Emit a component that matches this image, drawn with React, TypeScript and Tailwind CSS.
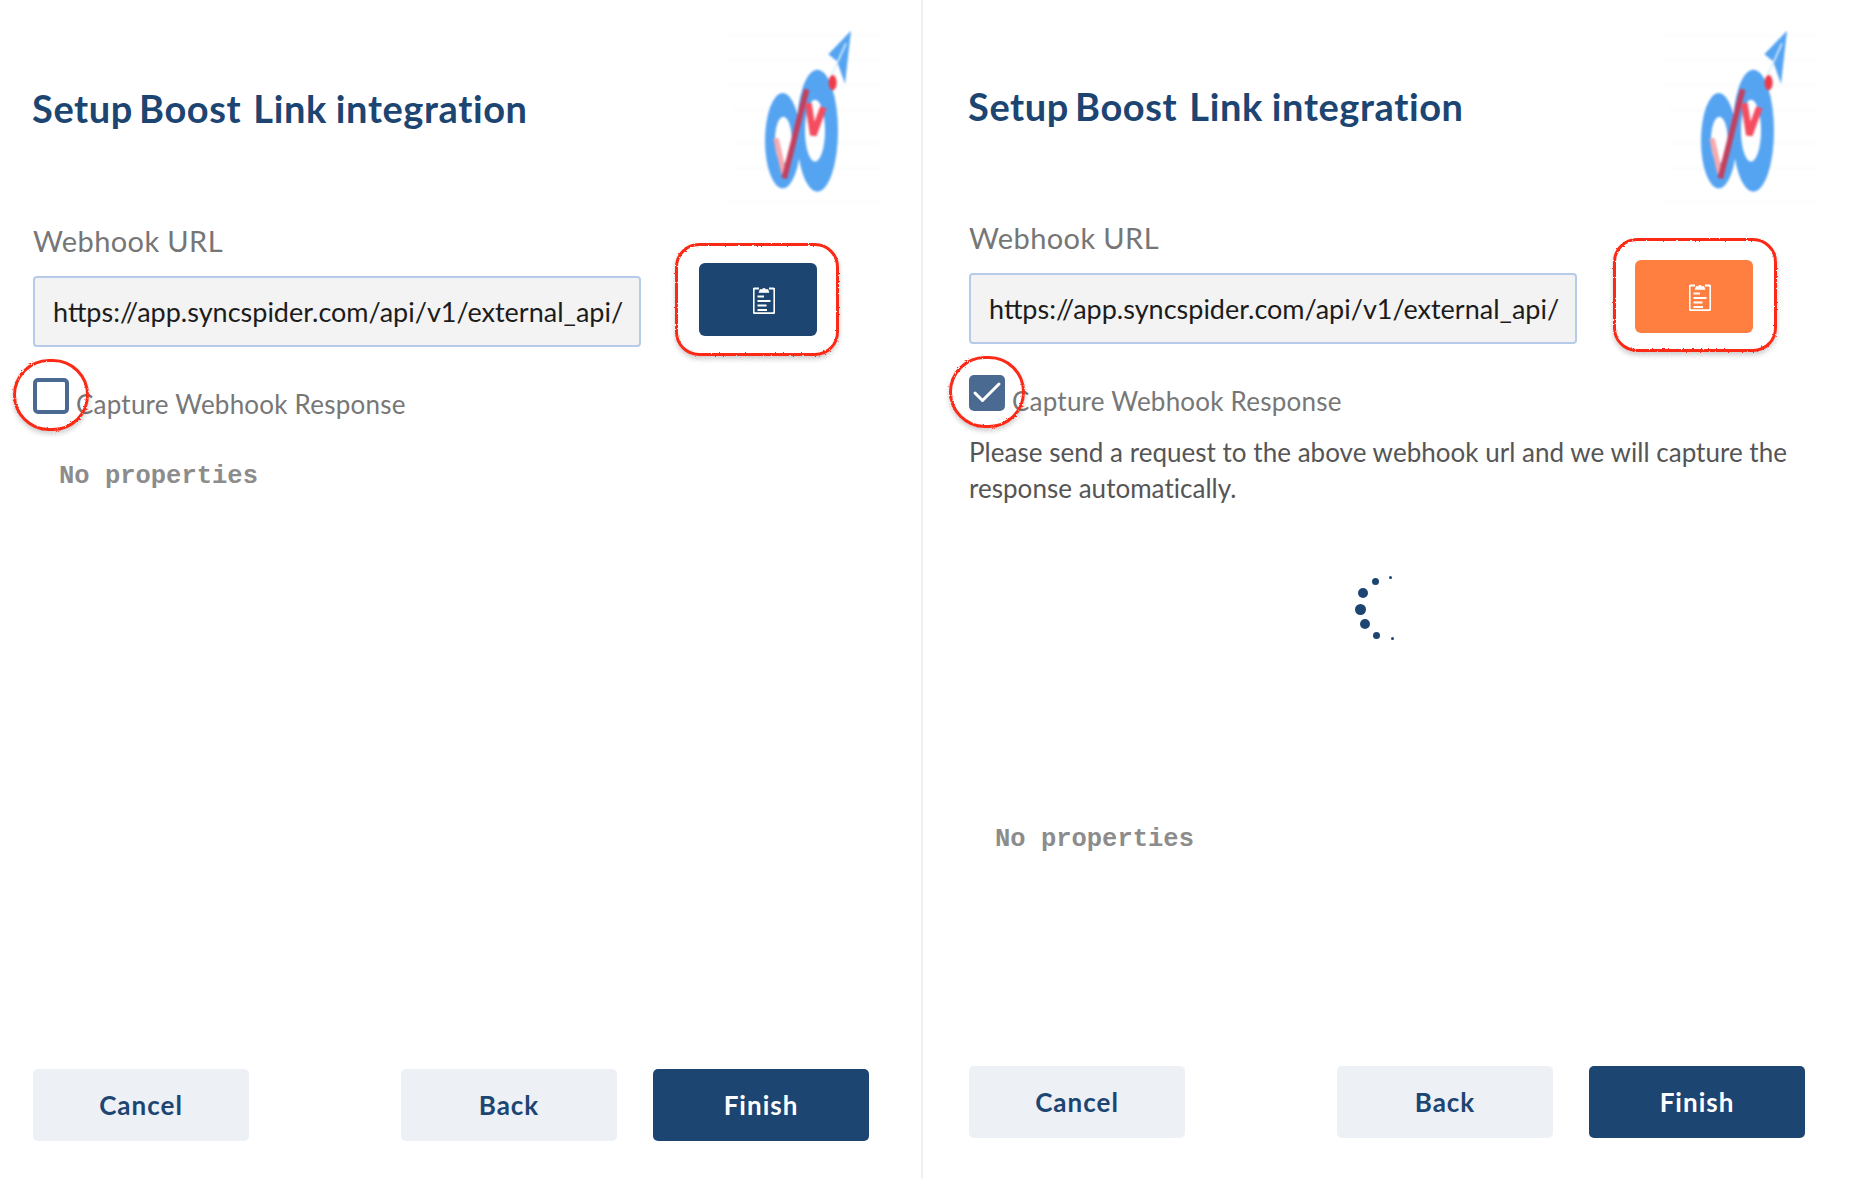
import { Check } from 'lucide-react';

const SANS = "font-['Lato','Open_Sans',sans-serif]";

function Logo() {
  return (
    <svg viewBox="0 0 660 660" className="h-[220px] w-[220px] shrink-0 -mr-[51px] blur-[1px]">
      <g stroke="#f6f7f9" strokeWidth="3">
        <line x1="85" y1="105" x2="540" y2="105" />
        <line x1="85" y1="180" x2="540" y2="180" />
        <line x1="85" y1="255" x2="540" y2="255" />
        <line x1="100" y1="330" x2="540" y2="330" />
        <line x1="100" y1="430" x2="540" y2="430" />
        <line x1="100" y1="505" x2="540" y2="505" />
        <line x1="85" y1="605" x2="540" y2="605" />
      </g>
      <path d="M453 92 L385 163 L411 184 L435 252 Z" fill="#55a4f2" />
      <line x1="438" y1="130" x2="395" y2="225" stroke="#dcecfb" strokeWidth="5" />
      <path
        fillRule="evenodd"
        fill="#55a4f2"
        d="M195 422a53 143 0 1 0 106 0a53 143 0 1 0 -106 0ZM225 420a25 70 0 1 1 50 0a25 70 0 1 1 -50 0Z"
      />
      <path
        fillRule="evenodd"
        fill="#55a4f2"
        d="M290 392a62 183 0 1 0 124 0a62 183 0 1 0 -124 0ZM315 392a30 93 0 1 1 60 0a30 93 0 1 1 -60 0Z"
      />
      <path d="M228 415 L252 520" fill="none" stroke="#f7a9ae" strokeWidth="16" />
      <path d="M253 535 L320 268" fill="none" stroke="#c2405f" strokeWidth="17" />
      <path d="M325 310 L340 405 L370 322" fill="none" stroke="#f54d60" strokeWidth="20" />
      <ellipse cx="398" cy="248" rx="12" ry="23" fill="#ee3b4a" />
    </svg>
  );
}

function ClipboardIcon() {
  return (
    <svg viewBox="0 0 22 28" className="h-7 w-[22px]" fill="none" stroke="#fff">
      <path d="M6 2.5H1.5a.8.8 0 0 0-.8.8v23a.8.8 0 0 0 .8.8h19a.8.8 0 0 0 .8-.8v-23a.8.8 0 0 0-.8-.8H16" strokeWidth="1.8" />
      <path d="M6 6.5 7 3.5h2.2a2 2 0 0 1 3.6 0H15l1 3Z" fill="#fff" strokeWidth="0.6" />
      <path d="M4.5 10.5h6.5M4.5 15h13M4.5 19.5h9M4.5 24h9.5" strokeWidth="2" />
    </svg>
  );
}

function Spinner() {
  const dots = [
    { x: 33.5, y: 0.5, d: 3 },
    { x: 16.5, y: 2.5, d: 7 },
    { x: 3, y: 13, d: 10 },
    { x: 0, y: 28.5, d: 11 },
    { x: 5, y: 44, d: 10 },
    { x: 17.5, y: 56.5, d: 7 },
    { x: 35.5, y: 61.5, d: 3 },
  ];
  return (
    <div className="relative h-[65px] w-10">
      {dots.map((dot) => (
        <span
          key={dot.y}
          className="absolute rounded-full bg-[#1d4572]"
          style={{ left: dot.x, top: dot.y, width: dot.d, height: dot.d }}
        />
      ))}
    </div>
  );
}

function Panel({ checked }: { checked: boolean }) {
  return (
    <section
      className={
        checked
          ? 'flex h-[1179px] min-w-0 flex-1 flex-col pb-[41px] pl-[46px] pr-[53px]'
          : 'flex h-[1179px] w-[923px] shrink-0 flex-col border-r-2 border-[#f0f0f2] pb-[38px] pl-[33px] pr-[52px]'
      }
    >
      <header className={checked ? 'flex h-[217px] items-start justify-between' : 'flex h-[220px] items-start justify-between'}>
        <h1 className={`${SANS} ${checked ? 'mt-[83px]' : 'mt-[85px]'} -ml-px flex text-[38px] font-bold leading-[46px] tracking-[0.6px] text-[#1d4572]`}>
          <span>Setup</span>
          <span className="ml-[6px]">Boost</span>
          <span className="ml-[12px]">Link</span>
          <span className="ml-[9px]">integration</span>
        </h1>
        <Logo />
      </header>

      <label className={`${SANS} block h-[43px] pt-[3px] text-[29px] leading-[36px] tracking-[0.4px] text-[#767676]`}>Webhook URL</label>

      <div className="flex items-start">
        <input
          readOnly
          value="https://app.syncspider.com/api/v1/external_api/webhook/abc"
          className={`${SANS} mt-[13px] h-[71px] w-[608px] rounded-[4px] border-2 border-[#b6cbea] bg-[#f3f3f3] pl-[18px] pr-[16px] text-[27px] text-[#1c1c1c] outline-none`}
        />
        <div className="relative ml-[58px]">
          <button
            className={
              checked
                ? 'flex h-[73px] w-[118px] items-center justify-center rounded-[6px] bg-[#ff7f41] pl-[12px]'
                : 'flex h-[73px] w-[118px] items-center justify-center rounded-[6px] bg-[#1d4572] pl-[12px]'
            }
          >
            <ClipboardIcon />
          </button>
          <span
            className={
              checked
                ? 'absolute -bottom-[19px] -left-[22px] -right-[24px] -top-[22px] rounded-[24px] border-[3px] border-[#fb2b17] shadow-[0_3px_5px_rgba(0,0,0,0.2)] [filter:url(#rough)]'
                : 'absolute -bottom-[20px] -left-[24px] -right-[22px] -top-[20px] rounded-[24px] border-[3px] border-[#fb2b17] shadow-[0_3px_5px_rgba(0,0,0,0.2)] [filter:url(#rough)]'
            }
          />
        </div>
      </div>

      <div className="mt-[31px] flex items-start">
        <div className="relative">
          <div
            className={
              checked
                ? 'flex h-9 w-9 items-center justify-center rounded-[5px] bg-[#4a6a91]'
                : 'h-9 w-9 rounded-[5px] border-[4px] border-[#4a6a91]'
            }
          >
            {checked && <Check size={36} strokeWidth={2} className="shrink-0 text-white" />}
          </div>
          <span className="absolute -bottom-[17px] -left-[20px] -right-[20px] -top-[19px] rounded-full border-[3px] border-[#fb2b17] shadow-[0_3px_5px_rgba(0,0,0,0.2)] [filter:url(#rough)]" />
        </div>
        <span className={`${SANS} ml-[7px] mt-[8px] text-[26px] leading-[36px] tracking-[0.22px] text-[#777777]`}>Capture Webhook Response</span>
      </div>

      {checked ? (
        <>
          <p className={`${SANS} mt-[16px] text-[26px] leading-[35.5px] tracking-[0.03px] text-[#555555]`}>
            Please send a request to the above webhook url and we will capture the response automatically.
          </p>
          <div className="ml-[386px] mt-[69px]">
            <Spinner />
          </div>
          <div className="ml-[26px] mt-[184px] font-['Liberation_Mono',monospace] text-[25.5px] font-bold leading-[32px] text-[#8c8c8c]">No properties</div>
        </>
      ) : (
        <div className="ml-[26px] mt-[39px] font-['Liberation_Mono',monospace] text-[25.5px] font-bold leading-[32px] text-[#8c8c8c]">No properties</div>
      )}

      <footer className={`${SANS} mt-auto flex gap-9 text-[26px] font-bold tracking-[1px] text-[#1d4572]`}>
        <button className="mr-auto h-[72px] w-[216px] rounded-[5px] bg-[#edf0f5]">Cancel</button>
        <button className="h-[72px] w-[216px] rounded-[5px] bg-[#edf0f5]">Back</button>
        <button className="h-[72px] w-[216px] rounded-[5px] bg-[#1d4572] text-white">Finish</button>
      </footer>
    </section>
  );
}

export default function App() {
  return (
    <main className="flex h-[1179px] w-[1858px] overflow-hidden bg-white">
      {/* hand drawn look of the red markers */}
      <svg className="absolute h-0 w-0">
        <filter id="rough">
          <feTurbulence type="fractalNoise" baseFrequency="0.5" numOctaves="2" />
          <feDisplacementMap in="SourceGraphic" scale="2.5" />
        </filter>
      </svg>
      <Panel checked={false} />
      <Panel checked />
    </main>
  );
}
